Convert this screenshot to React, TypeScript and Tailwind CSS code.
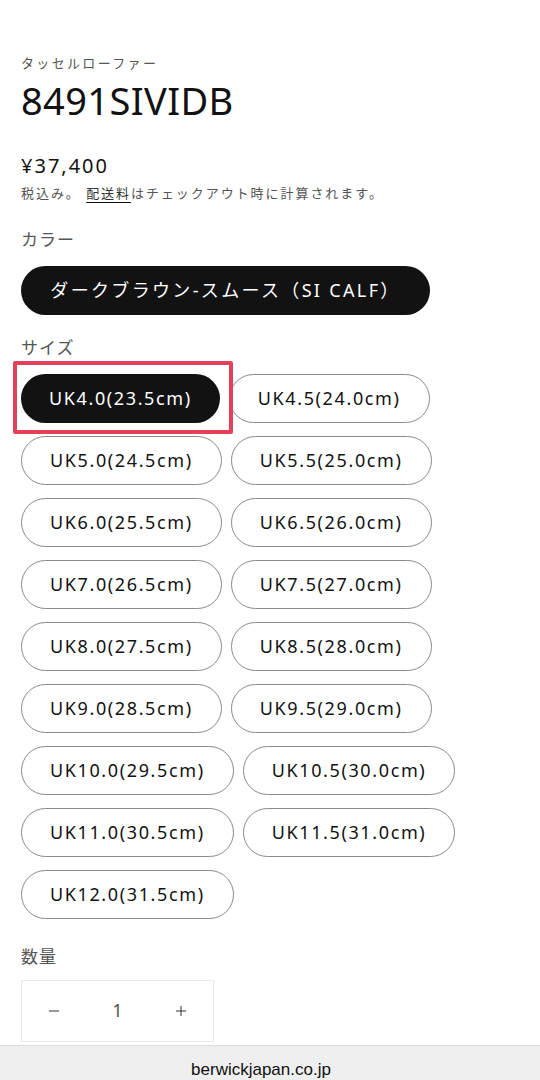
import { Minus, Plus } from "lucide-react";

const sizes = [
  "UK4.0(23.5cm)",
  "UK4.5(24.0cm)",
  "UK5.0(24.5cm)",
  "UK5.5(25.0cm)",
  "UK6.0(25.5cm)",
  "UK6.5(26.0cm)",
  "UK7.0(26.5cm)",
  "UK7.5(27.0cm)",
  "UK8.0(27.5cm)",
  "UK8.5(28.0cm)",
  "UK9.0(28.5cm)",
  "UK9.5(29.0cm)",
  "UK10.0(29.5cm)",
  "UK10.5(30.0cm)",
  "UK11.0(30.5cm)",
  "UK11.5(31.0cm)",
  "UK12.0(31.5cm)",
];

const font = "font-['Noto_Sans','Noto_Sans_CJK_JP',sans-serif]";

function SizePill({ label, selected }: { label: string; selected: boolean }) {
  const pill = (
    <button
      type="button"
      className={[
        "flex h-[49px] items-center rounded-full px-[28px] text-[18px] tracking-[0.09em]",
        selected
          ? "bg-[#121212] text-white"
          : "border border-[#8a8a8a] bg-white text-[#121212]",
      ].join(" ")}
    >
      {label}
    </button>
  );

  if (!selected) return pill;

  return (
    <div className="relative">
      {pill}
      <span className="pointer-events-none absolute -top-[13px] -bottom-[11px] -left-[8px] -right-[13px] rounded-[2px] border-[4px] border-[#e5405a]" />
    </div>
  );
}

export default function App() {
  return (
    <div className={`${font} flex min-h-[1080px] w-[540px] flex-col bg-white text-[#121212]`}>
      <main className="flex flex-1 flex-col px-[21px] pt-[54px]">
        <p className="text-[13px] leading-[19.5px] tracking-[0.18em] text-[#555]">タッセルローファー</p>
        <h1 className="mt-[4px] text-[38px] leading-[44px] tracking-[0.01em]">8491SIVIDB</h1>

        <p className="mt-[30px] text-[20px] leading-[28px] tracking-[0.1em]">¥37,400</p>
        <p className="mt-[4px] text-[13px] leading-[19.5px] tracking-[0.15em] text-[#555]">
          税込み。{" "}
          <span className="underline decoration-[#121212] underline-offset-[4px] text-[#333]">配送料</span>
          はチェックアウト時に計算されます。
        </p>

        <p className="mt-[24px] text-[17px] leading-[25.5px] tracking-[0.06em] text-[#555]">カラー</p>
        <div className="mt-[13px] flex">
          <button
            type="button"
            className="flex h-[49px] w-[409px] items-center justify-center rounded-full bg-[#121212] text-[18px] tracking-[0.13em] text-white"
          >
            ダークブラウン-スムース（SI CALF）
          </button>
        </div>

        <p className="mt-[20px] text-[17px] leading-[25.5px] tracking-[0.06em] text-[#555]">サイズ</p>
        <div className="mt-[14px] flex flex-wrap gap-x-[9px] gap-y-[13px]">
          {sizes.map((s, i) => (
            <SizePill key={s} label={s} selected={i === 0} />
          ))}
        </div>

        <p className="mt-[25px] text-[17px] leading-[25.5px] tracking-[0.06em] text-[#555]">数量</p>
        <div className="mt-[10px] mb-[3px] flex h-[62px] w-[193px] items-center justify-between border border-[#e8e8e8] px-[24px] text-[#333]">
          <Minus size={16} strokeWidth={1.5} />
          <span className="text-[18px] text-[#555]">1</span>
          <Plus size={16} strokeWidth={1.5} />
        </div>
      </main>

      <footer className="flex h-[35px] items-end justify-center border-t border-[#dcdcdc] bg-[#efefef] pr-[18px]">
        <span className="font-['Liberation_Sans',sans-serif] text-[17px] leading-[20px] text-[#111]">berwickjapan.co.jp</span>
      </footer>
    </div>
  );
}
